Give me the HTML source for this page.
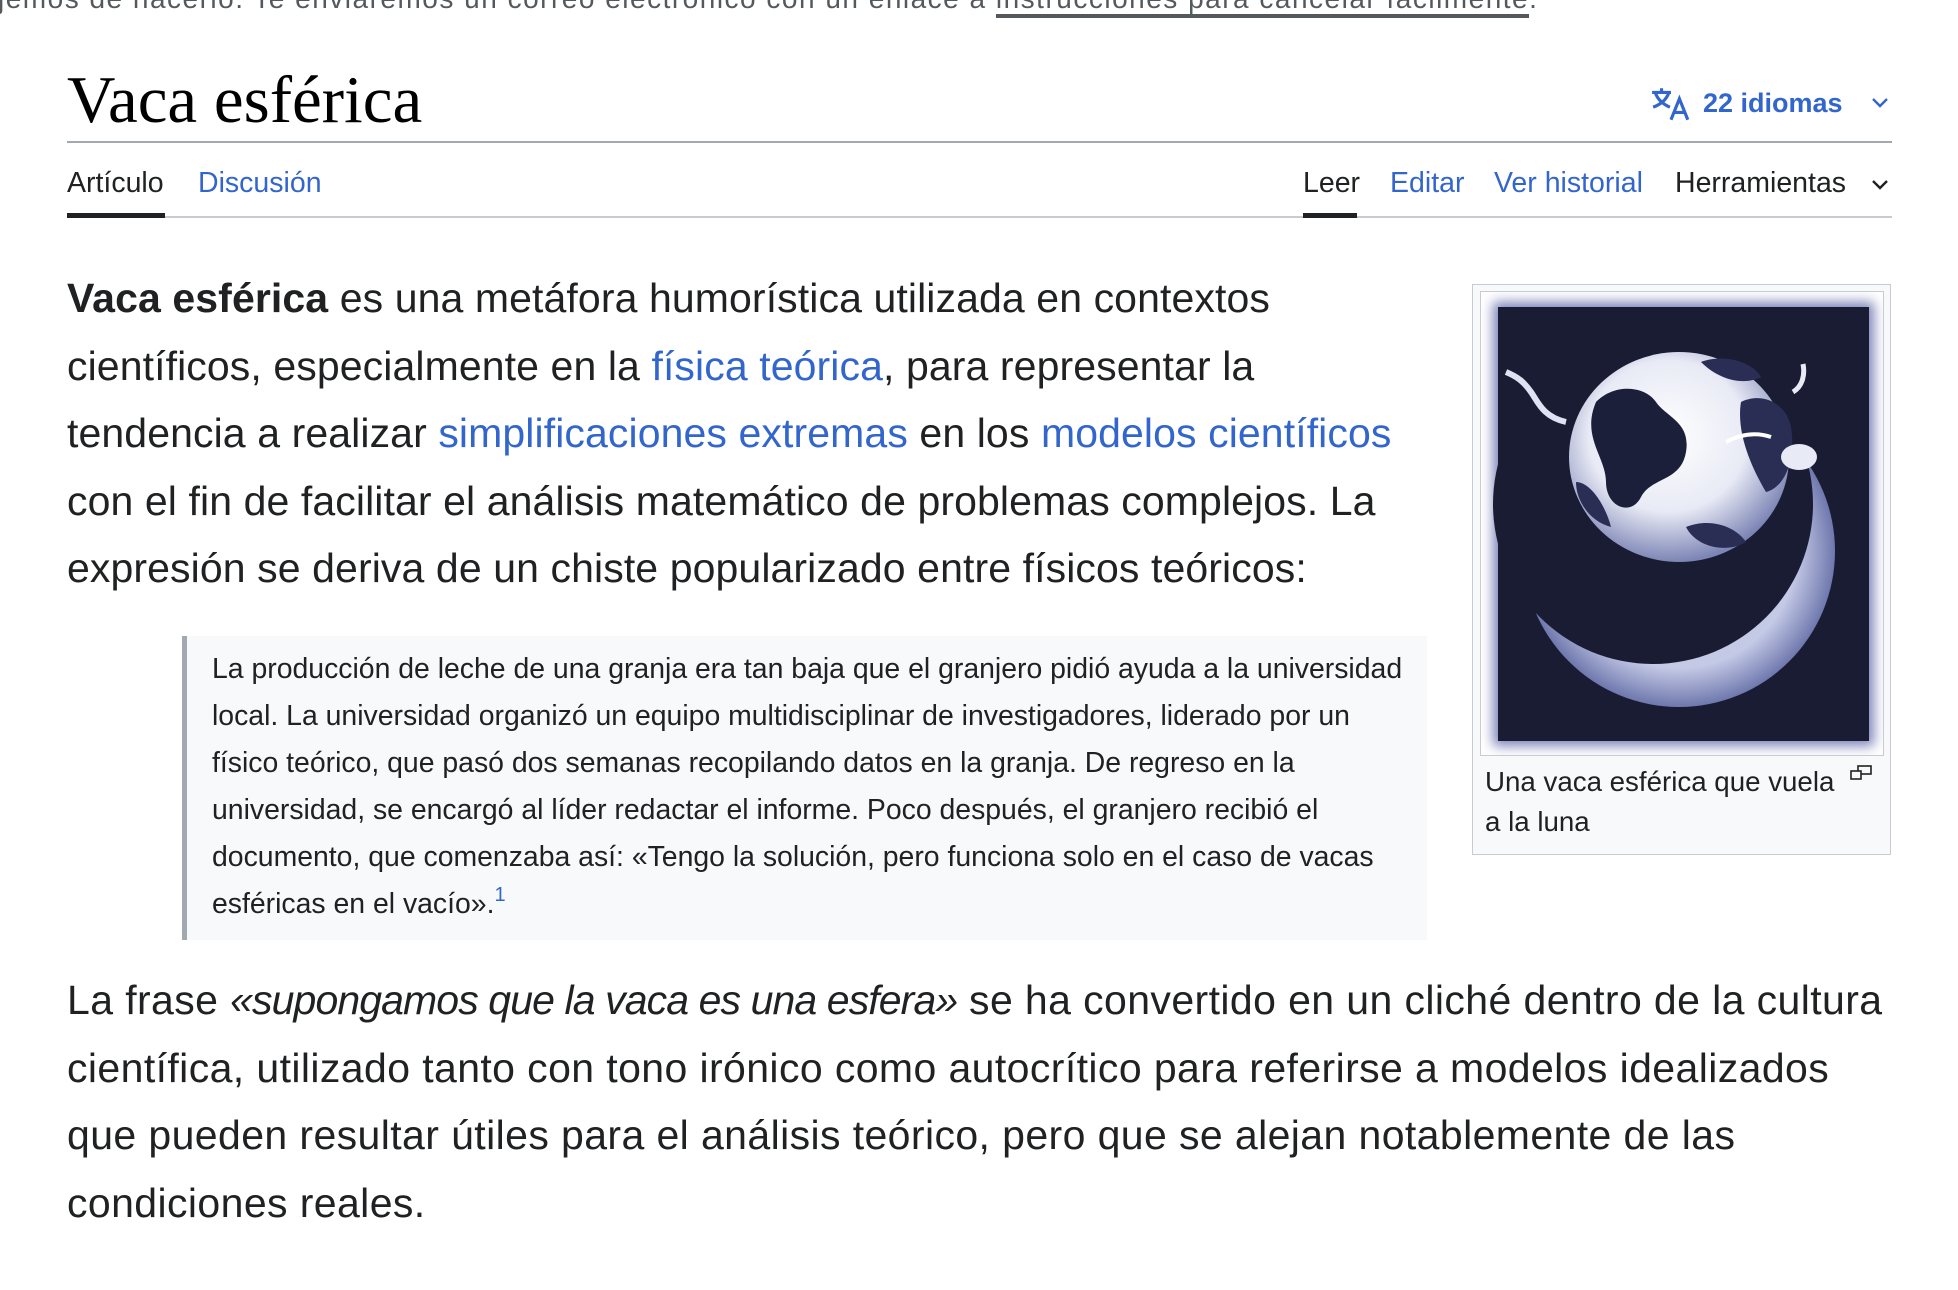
<!DOCTYPE html>
<html><head><meta charset="utf-8">
<style>
*{margin:0;padding:0;box-sizing:border-box}
body{width:1958px;height:1290px;overflow:hidden;background:#fff;font-family:"Liberation Sans",Arial,sans-serif;color:#202122;position:relative}
.abs{position:absolute;white-space:nowrap}
a{color:#3366cc;text-decoration:none}
.top{left:-2px;top:-17px;font-size:28px;color:#54595d;letter-spacing:1.5px}
.top u{text-decoration:none;border-bottom:4px solid #54595d}
h1{position:absolute;left:67px;top:64px;font-family:"Liberation Serif",serif;font-weight:normal;font-size:67px;line-height:72px;color:#000}
.hr{position:absolute;left:67px;width:1825px;top:141px;height:2px;background:#a2a9b1}
.tabs{top:166px;font-size:28.5px;line-height:34px}
.tabline{position:absolute;left:67px;width:1825px;top:216px;height:2px;background:#c8ccd1}
.ind{position:absolute;top:213px;height:5px;background:#202122}
.p{left:67px;font-size:41px;line-height:67.5px;letter-spacing:0.1px}
.p2{letter-spacing:0.4px}
.p2 i{letter-spacing:-0.9px}
.bq{position:absolute;left:182px;top:636px;width:1245px;height:304px;background:#f8f9fa;border-left:5px solid #a2a9b1}
.bqt{left:212px;top:646px;font-size:28.4px;line-height:47px}
.thumb{position:absolute;left:1472px;top:284px;width:419px;height:571px;background:#f8f9fa;border:1px solid #c8ccd1}
.inner{position:absolute;left:7px;top:6px;width:404px;height:465px;border:1px solid #c8ccd1;background:#fff}
.cap{left:1485px;top:762px;font-size:27.7px;line-height:40px}
</style></head><body>
<div class="abs top">jemos de hacerlo. Te enviaremos un correo electrónico con un enlace a <u>instrucciones para cancelar fácilmente</u>.</div>
<h1>Vaca esférica</h1>
<div class="abs" style="left:1650px;top:86px">
<svg width="42" height="36" viewBox="0 0 20 17" fill="none" stroke="#3366cc" stroke-width="1.5"><path d="M1 3h9M5.5 1v2M2.5 3c1 3 3.5 5.5 7 7M9 3c-1 3-3.5 5.5-7.5 7"/><path d="M10 16l4-10 4 10M11.5 12.5h5"/></svg></div>
<div class="abs" style="left:1703px;top:86px;font-size:27px;font-weight:bold;color:#3366cc;line-height:34px">22 idiomas</div>
<div class="abs" style="left:1871px;top:96px"><svg width="18" height="12" viewBox="0 0 18 12"><path d="M2 2l7 7 7-7" fill="none" stroke="#3366cc" stroke-width="2.4"/></svg></div>
<div class="hr"></div>
<div class="abs tabs" style="left:67px">Artículo</div>
<div class="abs tabs" style="left:198px"><a>Discusión</a></div>
<div class="abs tabs" style="left:1303px">Leer</div>
<div class="abs tabs" style="left:1390px"><a>Editar</a></div>
<div class="abs tabs" style="left:1494px"><a>Ver historial</a></div>
<div class="abs tabs" style="left:1675px">Herramientas</div>
<div class="abs" style="left:1871px;top:178px"><svg width="18" height="12" viewBox="0 0 18 12"><path d="M2 2l7 7 7-7" fill="none" stroke="#202122" stroke-width="2.4"/></svg></div>
<div class="tabline"></div>
<div class="ind" style="left:67px;width:98px"></div>
<div class="ind" style="left:1303px;width:54px"></div>

<div class="abs p" style="top:265px"><b>Vaca esférica</b> es una metáfora humorística utilizada en contextos<br>científicos, especialmente en la <a>física teórica</a>, para representar la<br>tendencia a realizar <a>simplificaciones extremas</a> en los <a>modelos científicos</a><br>con el fin de facilitar el análisis matemático de problemas complejos. La<br>expresión se deriva de un chiste popularizado entre físicos teóricos:</div>

<div class="bq"></div>
<div class="abs bqt">La producción de leche de una granja era tan baja que el granjero pidió ayuda a la universidad<br>local. La universidad organizó un equipo multidisciplinar de investigadores, liderado por un<br>físico teórico, que pasó dos semanas recopilando datos en la granja. De regreso en la<br>universidad, se encargó al líder redactar el informe. Poco después, el granjero recibió el<br>documento, que comenzaba así: «Tengo la solución, pero funciona solo en el caso de vacas<br>esféricas en el vacío».<span style="color:#3366cc;font-size:20px;position:relative;top:-12px">1</span></div>

<div class="abs p p2" style="top:967px">La frase <i>«supongamos que la vaca es una esfera»</i> se ha convertido en un cliché dentro de la cultura<br>científica, utilizado tanto con tono irónico como autocrítico para referirse a modelos idealizados<br>que pueden resultar útiles para el análisis teórico, pero que se alejan notablemente de las<br>condiciones reales.</div>

<div class="thumb"><div class="inner">
<svg width="402" height="463" viewBox="0 0 402 463">
<defs>
<filter id="bl"><feGaussianBlur stdDeviation="6"/></filter>
<radialGradient id="sp" cx="0.45" cy="0.4" r="0.6"><stop offset="0" stop-color="#fff"/><stop offset="0.6" stop-color="#e8eaf5"/><stop offset="1" stop-color="#7d85b5"/></radialGradient>
<radialGradient id="mn" cx="0.5" cy="0.5" r="0.5"><stop offset="0.75" stop-color="#c4c9e6"/><stop offset="1" stop-color="#6f78ad"/></radialGradient>
</defs>
<rect x="12" y="10" width="381" height="444" fill="#7b82b8" filter="url(#bl)"/>
<rect x="17" y="15" width="371" height="434" fill="#1a1c33"/>
<circle cx="198" cy="259" r="156" fill="url(#mn)"/>
<circle cx="172" cy="212" r="160" fill="#1a1c33"/>
<path d="M25 80c12 5 18 10 25 20s12 25 35 30" stroke="#dfe2f2" stroke-width="6" fill="none"/>
<ellipse cx="198" cy="165" rx="110" ry="105" fill="url(#sp)"/>
<path d="M115 110c20-20 50-15 60 0s35 20 30 50-35 25-45 45-35 10-35-15-25-45-10-80z" fill="#1c1f3a"/>
<path d="M220 70c20-8 50-2 60 15-15 8-40 5-60-15z" fill="#2a2e55"/>
<path d="M260 110c20-10 45 0 50 25 5 30-5 60-25 65-15-25-30-60-25-90z" fill="#2a2e55"/>
<path d="M205 235c25-10 50 0 60 15-20 12-50 5-60-15z" fill="#2a2e55"/>
<path d="M95 190c15 0 30 25 35 45-20-5-35-25-35-45z" fill="#2a2e55"/>
<path d="M245 150c15-8 30-10 45-5" stroke="#fff" stroke-width="4" fill="none"/>
<ellipse cx="318" cy="165" rx="18" ry="13" fill="#e8eaf5"/>
<path d="M312 100c10-6 12-18 10-28" stroke="#e8eaf5" stroke-width="5" fill="none"/>
</svg></div></div>
<div class="abs cap">Una vaca esférica que vuela<br>a la luna</div>
<div class="abs" style="left:1850px;top:765px"><svg width="22" height="16" viewBox="0 0 22 16" fill="none" stroke="#202122" stroke-width="1.6"><rect x="8" y="1" width="13" height="8"/><rect x="1" y="6" width="10" height="8" fill="#f8f9fa"/></svg></div>
</body></html>
